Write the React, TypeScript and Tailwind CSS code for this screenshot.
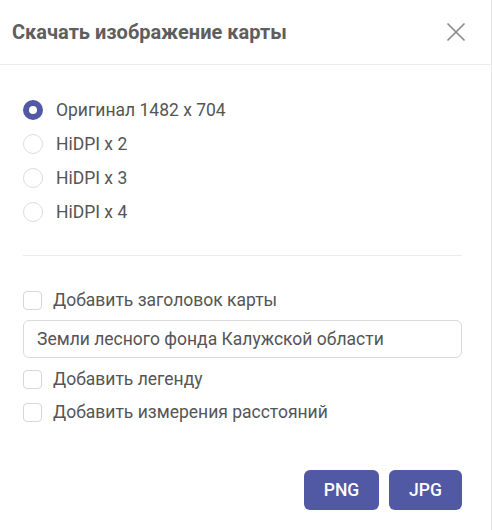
import { useState } from 'react';

const options = ['Оригинал 1482 x 704', 'HiDPI x 2', 'HiDPI x 3', 'HiDPI x 4'];

function Radio({ checked }: { checked: boolean }) {
  return checked ? (
    <span className="w-5 h-5 rounded-full border-[6px] border-[#5158a4] bg-white shrink-0" />
  ) : (
    <span className="w-5 h-5 rounded-full border border-[#dcdcdc] bg-white shrink-0" />
  );
}

function Checkbox() {
  return <span className="w-[19px] h-[19px] rounded-[4px] border border-[#d6d6d6] bg-white shrink-0" />;
}

export default function App() {
  const [selected, setSelected] = useState(0);

  return (
    <div className="w-[492px] h-[530px] bg-white text-[#555] font-['Roboto',sans-serif] border-r border-[#e8e8e8]">
      {/* Header */}
      <div className="h-[65px] flex items-center justify-between pl-3 pr-[25px] border-b border-[#ececec]">
        <h2 className="text-[20px] font-bold text-[#5e5e5e]">Скачать изображение карты</h2>
        <svg width="20" height="20" viewBox="0 0 20 20" className="text-[#8a8a8a]">
          <path d="M1.5 1.5L18.5 18.5M18.5 1.5L1.5 18.5" stroke="currentColor" strokeWidth="1.7" />
        </svg>
      </div>

      <div className="pl-[23px] pr-[29px]">
        {/* Resolution */}
        <div className="pt-[28px]">
          {options.map((o, i) => (
            <div
              key={o}
              className="h-[34px] flex items-center gap-[13px] cursor-pointer"
              onClick={() => setSelected(i)}
            >
              <Radio checked={selected === i} />
              <span className="text-[17.5px]">{o}</span>
            </div>
          ))}
        </div>

        <div className="mt-[26px] border-t border-[#ececec]" />

        {/* Options */}
        <div className="mt-[27px]">
          <div className="h-[34px] flex items-center gap-[11px]">
            <Checkbox />
            <span className="text-[17.5px]">Добавить заголовок карты</span>
          </div>
          <div className="mt-[3px] h-[38px] flex items-center px-[13px] border border-[#dadada] rounded-md text-[17.5px] text-[#555]">
            Земли лесного фонда Калужской области
          </div>
          <div className="mt-1 h-[34px] flex items-center gap-[11px]">
            <Checkbox />
            <span className="text-[17.5px]">Добавить легенду</span>
          </div>
          <div className="h-[33px] flex items-center gap-[11px]">
            <Checkbox />
            <span className="text-[17.5px]">Добавить измерения расстояний</span>
          </div>
        </div>

        {/* Actions */}
        <div className="mt-[41px] flex justify-end gap-[10px]">
          <button className="w-[75px] h-10 rounded-md bg-[#5158a4] text-white text-[17.5px] font-medium">PNG</button>
          <button className="w-[73px] h-10 rounded-md bg-[#5158a4] text-white text-[17.5px] font-medium">JPG</button>
        </div>
      </div>
    </div>
  );
}
